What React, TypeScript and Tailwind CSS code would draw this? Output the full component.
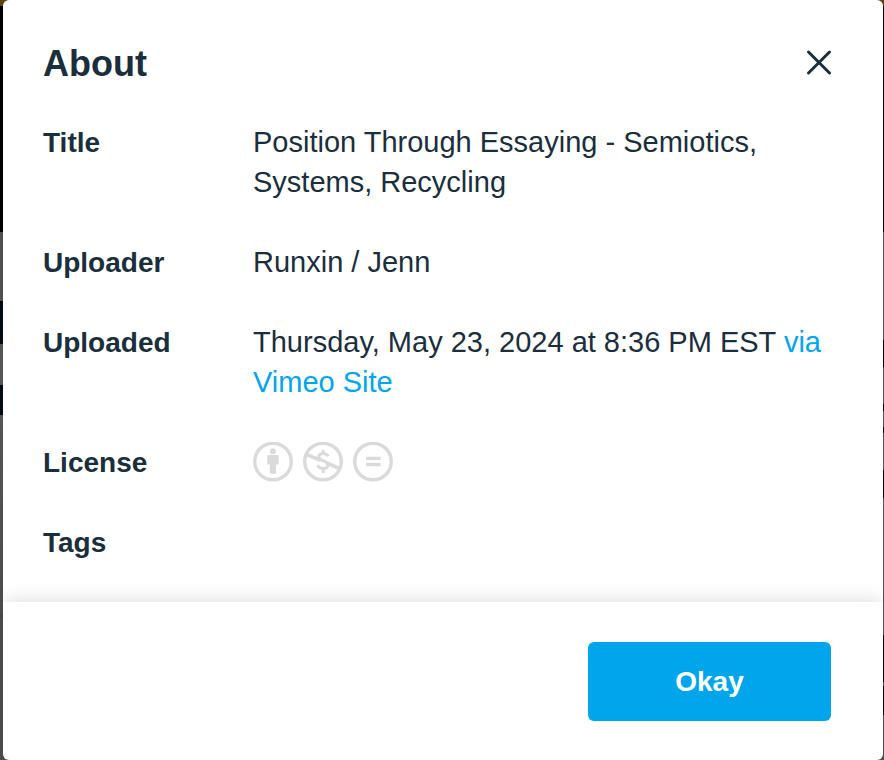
import type { ReactNode } from "react";

function Row({ label, children }: { label: string; children?: ReactNode }) {
  return (
    <div className="flex">
      <dt className="h-10 w-[210px] shrink-0 leading-[42px] font-bold">{label}</dt>
      <dd className="min-w-0 flex-1 text-[29px]">{children}</dd>
    </div>
  );
}

function LicenseIcon({ label, children }: { label: string; children: ReactNode }) {
  return (
    <svg viewBox="0 0 40 40" className="size-10" role="img" aria-label={label} fill="none" stroke="#dadada">
      <circle cx="20" cy="19.5" r="18.3" strokeWidth="3.4" />
      {children}
    </svg>
  );
}

export default function App() {
  return (
    <div className="flex min-h-screen bg-[linear-gradient(#5a4710_6px,#000_6px_232px,#505050_232px_301px,#030a11_301px_344px,#555_344px_385px,#030a11_385px_415px,#555_415px,#4b4b4b_615px,#444_615px_617px,#4b4b4b_617px),linear-gradient(#5a4710_6px,#000_6px_232px,#555_232px_340px,#000_340px_367px,#555_367px_404px,#000_404px_411px,#555_411px_427px,#000_427px_433px,#555_433px_470px,#000_470px_498px,#555_498px_635px,#000_635px_682px,#444_682px_686px,#000_686px_715px,#4b4b4b_715px)] bg-[length:50%_100%] bg-[position:left,right] bg-no-repeat pl-[3px] pr-px font-['Liberation_Sans',Arial,sans-serif] text-[28px] leading-10 text-[#1a2e3b]">
      <main
        role="dialog"
        aria-labelledby="about-title"
        className="flex min-w-0 flex-1 flex-col overflow-hidden rounded-md bg-white"
      >
        <div className="flex-1 px-10 pt-10 pb-10">
          <header className="flex items-start justify-between pr-px">
            <h1 id="about-title" className="text-4xl leading-12 font-bold">
              About
            </h1>
            <button type="button" aria-label="Close" className="grid size-[46px] place-items-center">
              <svg viewBox="0 0 24 24" className="size-6 overflow-visible" fill="none" stroke="currentColor" strokeWidth="3" strokeLinecap="round">
                <path d="M1.5 1 22.5 22M22.5 1 1.5 22" />
              </svg>
            </button>
          </header>
          <dl className="mt-[34px] flex flex-col gap-10">
            <Row label="Title">Position Through Essaying - Semiotics, Systems, Recycling</Row>
            <Row label="Uploader">Runxin / Jenn</Row>
            <Row label="Uploaded">
              Thursday, May 23, 2024 at 8:36 PM EST{" "}
              <a href="#vimeo" className="text-[#00a5eb]">
                via Vimeo Site
              </a>
            </Row>
            <Row label="License">
              <div className="flex gap-2.5">
                <LicenseIcon label="Attribution">
                  <g fill="#dadada" stroke="none">
                    <circle cx="20" cy="9.3" r="3" />
                    <path d="M15.5 13h9q1.2 0 1.2 1.2V22.5h-2.6v9.2h-6.2v-9.2h-2.6v-8.3q0-1.2 1.2-1.2Z" />
                  </g>
                </LicenseIcon>
                <LicenseIcon label="Noncommercial">
                  <path d="M3.5 12.3 18 18.6M23 20.7 36.5 26.5" strokeWidth="3.6" />
                  <path d="M25.3 14.3c-1.2-2-2.9-2.8-5.2-2.8-2.5 0-4.2 1.2-4.2 3.2 0 2.2 1.9 3 4.6 4.1 2.9 1.2 4.3 2.1 4.3 4.1 0 2.4-2 3.6-4.5 3.6-2.6 0-4.5-1.2-5.8-3.2M20.2 7.7v4M20.2 26.5v4.5" strokeWidth="3" />
                </LicenseIcon>
                <LicenseIcon label="No derivatives">
                  <path d="M13 16.3h14.5M13 22.7h14.5" strokeWidth="3.2" />
                </LicenseIcon>
              </div>
            </Row>
            <Row label="Tags" />
          </dl>
        </div>
        <footer className="flex justify-end pt-10 pr-[52px] pb-[39px] pl-10 shadow-[0_0_20px_rgba(0,0,0,0.15)]">
          <button type="button" className="h-[79px] w-[243px] rounded-md bg-[#00a5eb] font-bold text-white">
            Okay
          </button>
        </footer>
      </main>
    </div>
  );
}
